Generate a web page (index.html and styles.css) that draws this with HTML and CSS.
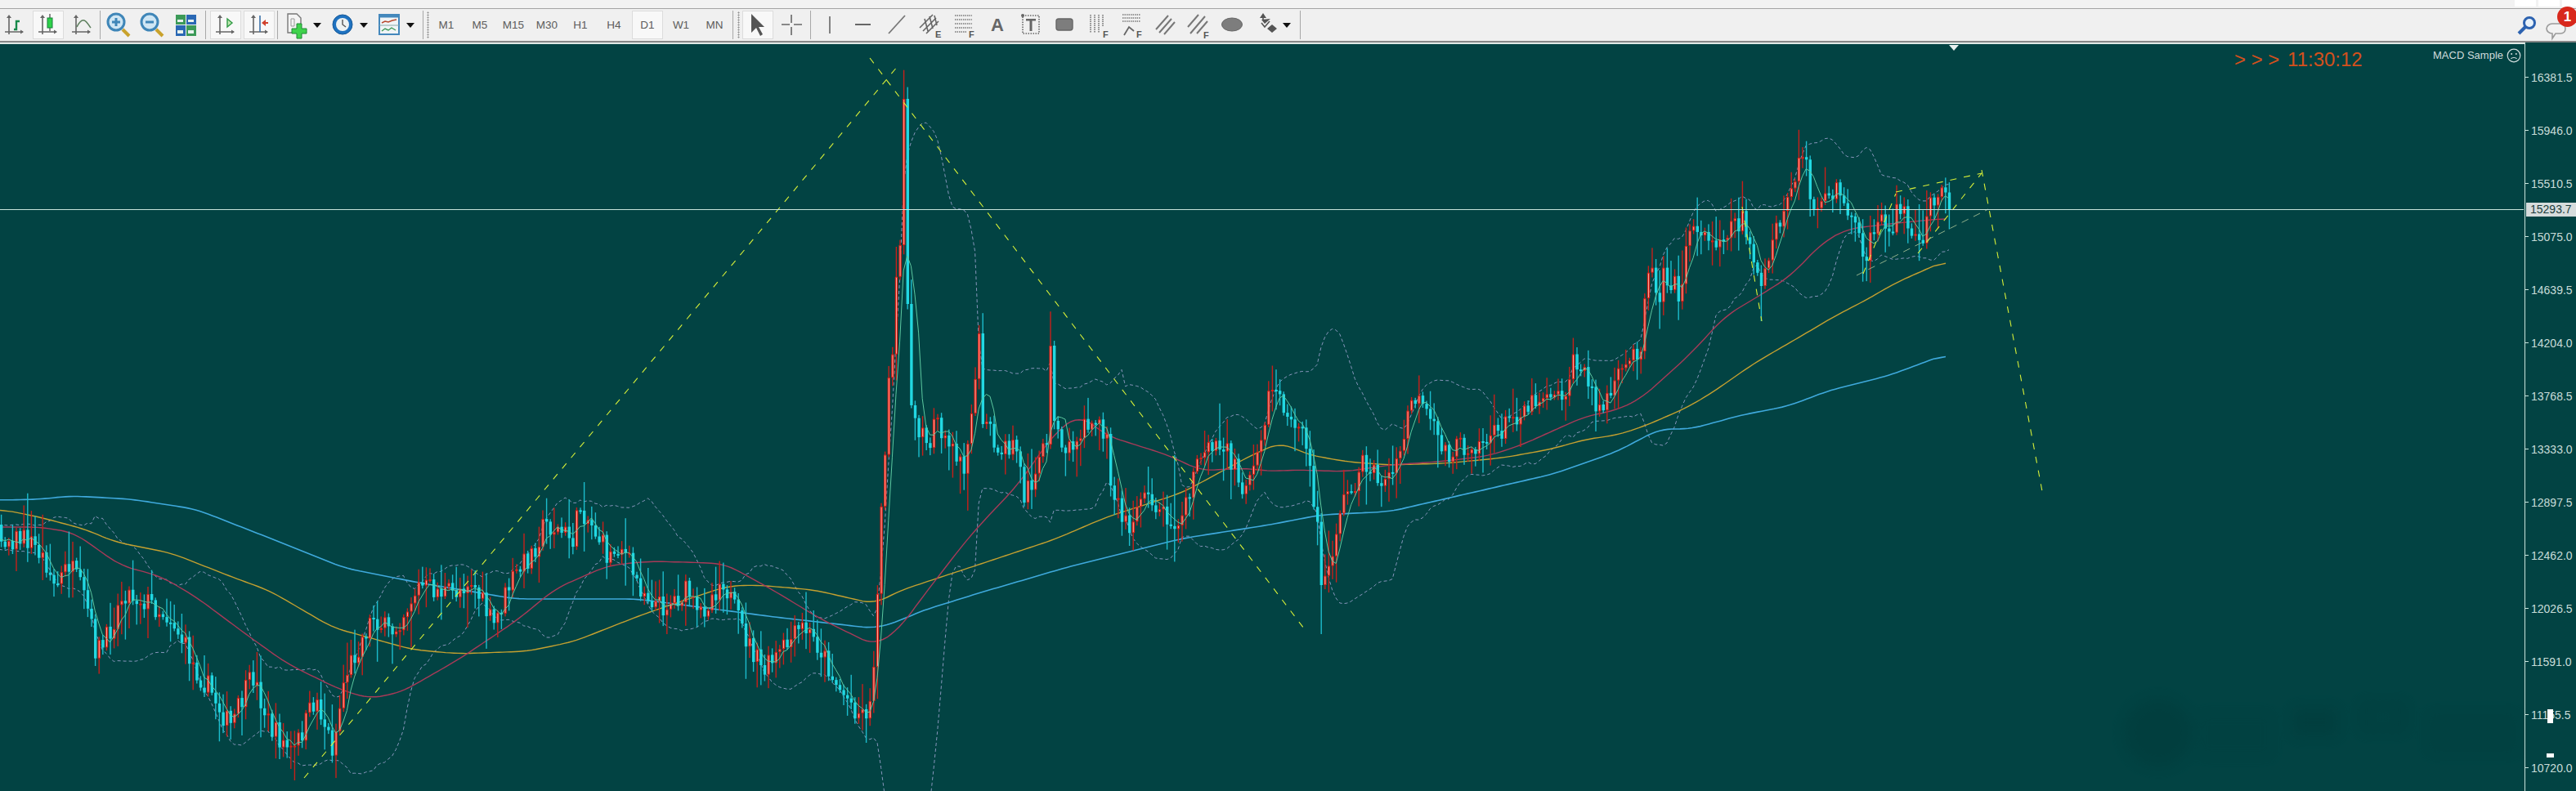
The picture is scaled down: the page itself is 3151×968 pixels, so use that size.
FILE: index.html
```html
<!DOCTYPE html>
<html lang="en">
<head>
<meta charset="UTF-8">
<title>MetaTrader chart</title>
<link rel="stylesheet" href="styles.css">
</head>
<body>

<svg class="defs" width="0" height="0">
  <!-- The two chart axes most of the first buttons share -->
  <symbol id="axes" viewBox="0 0 38 35">
    <path d="M12 8v21M7 26h22" fill="none" stroke="#666" stroke-width="1.6"/>
    <path d="M12 5l-3 4h6zM30 26l-4-2.5v5z" fill="#666"/>
  </symbol>
</svg>

<div class="titlebar">
  <span class="win-btn"></span>
  <span class="win-btn"></span>
  <span class="win-btn win-btn-small"></span>
</div>

<div class="toolbar">
  <div class="group first">
    <div class="btn"><svg viewBox="0 0 38 35"><use href="#axes"/><path d="M18 23h3v-10h4" fill="none" stroke="#17894a" stroke-width="2.4"/></svg></div>
    <div class="btn active"><svg viewBox="0 0 38 35"><use href="#axes"/><path d="M21 4v21" stroke="#444" stroke-width="1.2"/><rect x="18" y="9" width="6" height="12" fill="#2fd24a" stroke="#17803a"/></svg></div>
    <div class="btn"><svg viewBox="0 0 38 35"><use href="#axes"/><path d="M13 20c3-6 6-9 9-8s5 5 8 9" fill="none" stroke="#5d7f5d" stroke-width="1.6"/></svg></div>
  </div>
  <span class="sep sep-narrow"></span>
  <div class="group">
    <div class="btn"><svg viewBox="0 0 38 35"><path d="M24 23l8 8" stroke="#c9a22c" stroke-width="4"/><circle cx="16" cy="14" r="10" fill="#cfe6f4" stroke="#3f86b8" stroke-width="3"/><path d="M11 14h10M16 9v10" stroke="#3f86b8" stroke-width="3"/></svg></div>
    <div class="btn"><svg viewBox="0 0 38 35"><path d="M24 23l8 8" stroke="#c9a22c" stroke-width="4"/><circle cx="16" cy="14" r="10" fill="#cfe6f4" stroke="#3f86b8" stroke-width="3"/><path d="M11 14h10" stroke="#3f86b8" stroke-width="3"/></svg></div>
    <div class="btn"><svg viewBox="0 0 38 35">
      <rect x="7" y="5" width="12" height="12" fill="#3c9a58"/><rect x="20" y="5" width="12" height="12" fill="#2a68b4"/>
      <rect x="7" y="18" width="12" height="13" fill="#2a68b4"/><rect x="20" y="18" width="12" height="13" fill="#3c9a58"/>
      <path d="M9 11h7v3H9zM22 11h7v3h-7zM9 24h7v4H9zM22 24h7v4h-7z" fill="#e8f2ee"/>
    </svg></div>
  </div>
  <span class="sep sep-wide"></span>
  <div class="group">
    <div class="btn active"><svg viewBox="0 0 38 35"><use href="#axes"/><path d="M21 10l6 5-6 5z" fill="#bfe8b0" stroke="#2f9a45" stroke-width="1.4"/></svg></div>
    <div class="btn active"><svg viewBox="0 0 38 35"><use href="#axes"/><path d="M20 6v20" stroke="#3a70a8" stroke-width="1.6"/><path d="M22 15l5-4v3h3v2h-3v3z" fill="#d0402c"/></svg></div>
  </div>
  <span class="sep sep-narrow"></span>
  <div class="group tight">
    <div class="drop">
      <div class="btn"><svg viewBox="0 0 38 35"><path d="M9 4h11l5 5v18H9z" fill="#f4f4f4" stroke="#777" stroke-width="1.4"/><path d="M13 10h4v9h-4z" fill="none" stroke="#999"/><path d="M20 16h6v6h6v6h-6v6h-6v-6h-6v-6h6z" fill="#3fd24c" stroke="#1f8a35"/></svg></div>
      <span class="caret"></span>
    </div>
    <div class="drop">
      <div class="btn"><svg viewBox="0 0 38 35"><circle cx="19" cy="17" r="12" fill="#1f72c0" stroke="#185a98"/><circle cx="19" cy="17" r="8" fill="#eef2f2"/><path d="M19 11v6l4 3" fill="none" stroke="#555" stroke-width="1.4"/></svg></div>
      <span class="caret"></span>
    </div>
    <div class="drop">
      <div class="btn"><svg viewBox="0 0 38 35"><rect x="7" y="5" width="24" height="24" fill="#f0f4f6" stroke="#4488bc" stroke-width="2"/><path d="M7 7h24" stroke="#4488bc" stroke-width="3"/><path d="M10 15l4-2 4 1 5-2 5-1" fill="none" stroke="#b84a30" stroke-width="1.4"/><path d="M7 18h24" stroke="#8aa" stroke-width="1"/><path d="M10 25l4-3 4 2 4-3 5 3" fill="none" stroke="#3c9a58" stroke-width="1.4"/></svg></div>
      <span class="caret"></span>
    </div>
  </div>
  <span class="sep sep-narrow"></span>
  <span class="grip"></span>
  <div class="group">
    <div class="btn tf">M1</div>
    <div class="btn tf">M5</div>
    <div class="btn tf">M15</div>
    <div class="btn tf">M30</div>
    <div class="btn tf">H1</div>
    <div class="btn tf">H4</div>
    <div class="btn tf active">D1</div>
    <div class="btn tf">W1</div>
    <div class="btn tf">MN</div>
  </div>
  <span class="sep sep-narrow"></span>
  <span class="grip grip-tools"></span>
  <div class="group">
    <div class="btn active"><svg viewBox="0 0 38 35"><path d="M11 4v23l6-6 5 10 3-2-5-9h7z" fill="#555"/></svg></div>
    <div class="btn"><svg viewBox="0 0 38 35"><path d="M19 5v10M19 20v10M7 17h10M22 17h10" stroke="#666" stroke-width="1.6"/></svg></div>
  </div>
  <span class="sep sep-tools"></span>
  <div class="group">
    <div class="btn"><svg viewBox="0 0 38 35"><path d="M19 7v21" stroke="#666" stroke-width="1.6"/></svg></div>
    <div class="btn"><svg viewBox="0 0 38 35"><path d="M9 17h19" stroke="#666" stroke-width="2"/></svg></div>
    <div class="btn"><svg viewBox="0 0 38 35"><path d="M9 28L29 6" stroke="#777" stroke-width="1.8"/></svg></div>
    <div class="btn"><svg viewBox="0 0 38 35"><path d="M6 21L22 5M10 25L26 9M14 28L29 13M12 10l4 15M18 7l4 15M24 6l3 12" stroke="#666" stroke-width="1.6" fill="none"/><text x="25" y="33" class="mark">E</text></svg></div>
    <div class="btn"><svg viewBox="0 0 38 35"><path d="M8 6h21M8 11h21M8 16h21M8 21h21M8 26h14" stroke="#777" stroke-width="1.6" stroke-dasharray="1.5 1"/><text x="25" y="33" class="mark">F</text></svg></div>
    <div class="btn"><span class="letter">A</span></div>
    <div class="btn"><svg viewBox="0 0 38 35"><rect x="9" y="6" width="20" height="22" fill="none" stroke="#666" stroke-width="1.6" stroke-dasharray="1.5 1.5"/><circle cx="9" cy="6" r="2" fill="#666"/><path d="M13 10h12v2.500h-4.500V25h-3V12.500H13z" fill="#666"/></svg></div>
    <div class="btn"><svg viewBox="0 0 38 35"><rect x="9" y="10" width="20" height="14" rx="3" fill="#7d7d7d" stroke="#666" stroke-width="1.4"/></svg></div>
    <div class="btn"><svg viewBox="0 0 38 35"><path d="M10 5v22M15 5v22M20 5v22M25 5v14" stroke="#777" stroke-width="1.6" stroke-dasharray="1.5 1"/><text x="25" y="33" class="mark">F</text></svg></div>
    <div class="btn"><svg viewBox="0 0 38 35"><path d="M8 5h22M8 9h22M8 13h22" stroke="#777" stroke-width="1.6" stroke-dasharray="1.5 1"/><path d="M10 30l6-10 6 5" fill="none" stroke="#666" stroke-width="1.8"/><text x="25" y="33" class="mark">F</text></svg></div>
    <div class="btn"><svg viewBox="0 0 38 35"><path d="M8 23L23 6M12 27L27 10M18 29L31 14" stroke="#777" stroke-width="2"/></svg></div>
    <div class="btn"><svg viewBox="0 0 38 35"><path d="M6 20L19 5M9 28L27 7M17 28L30 13" stroke="#777" stroke-width="2"/><text x="25" y="34" class="mark">F</text></svg></div>
    <div class="btn"><svg viewBox="0 0 38 35"><ellipse cx="19" cy="17" rx="12.500" ry="8" fill="#7d7d7d" stroke="#666"/></svg></div>
    <div class="drop">
      <div class="btn"><svg viewBox="0 0 38 35"><path d="M16 3l4 6h-8zM14 11l4 5 7-6M27 27l-6-5 6-5 6 5z" fill="#555"/><path d="M16 9v3M14 15l4 5 6-7" fill="none" stroke="#555" stroke-width="1.6"/></svg></div>
      <span class="caret"></span>
    </div>
  </div>
  <span class="sep sep-end"></span>
  <div class="right-icons">
    <svg class="search" viewBox="0 0 24 24"><path d="M10 14l-8 8" stroke="#2c62b0" stroke-width="4"/><circle cx="15" cy="9" r="6.500" fill="#e8f2fa" stroke="#2c62b0" stroke-width="3"/></svg>
    <div class="chat">
      <svg viewBox="0 0 26 24"><path d="M9 3h10c4 0 6 3 6 6s-2 6-6 6h-6l-4 6v-6c-4 0-7-3-7-6s3-6 7-6z" fill="#f2f2f2" stroke="#9a9a9a" stroke-width="1.6"/></svg>
      <span class="badge">1</span>
    </div>
  </div>
</div>

<div class="workspace">
  <div class="chart" id="chart">
    <div class="clock"><span class="clock-arrows">&gt; &gt; &gt;</span> 11:30:12</div>
    <div class="ea-name">MACD Sample
      <svg viewBox="0 0 18 18"><circle cx="9" cy="9" r="7.800" fill="none" stroke="#d0dcdc" stroke-width="1.2"/><circle cx="6.200" cy="7" r="1" fill="#d0dcdc"/><circle cx="11.800" cy="7" r="1" fill="#d0dcdc"/><path d="M5.500 13c1-2 6-2 7 0" fill="none" stroke="#d0dcdc" stroke-width="1.2"/></svg>
    </div>
    <span class="shift-mark"></span>
  </div>
  <div class="axis" id="axis"></div>
  <div class="price-tag">15293.7</div>
  <span class="smudge smudge-a"></span>
  <span class="smudge smudge-b"></span>
  <svg class="watermark" viewBox="0 0 540 110">
    <ellipse cx="70" cy="55" rx="42" ry="42"/>
    <rect x="235" y="25" width="54" height="34"/>
    <rect x="322" y="22" width="46" height="27" fill="none" stroke="#013535" stroke-width="8"/>
    <rect x="400" y="30" width="110" height="50" opacity="0.45"/>
    <rect x="120" y="30" width="90" height="55" opacity="0.3"/>
  </svg>
</div>

<script src="chart.js"></script>
</body>
</html>
```

FILE: styles.css
```css
* {
  box-sizing: border-box;
}
html, body {
  margin: 0;
  padding: 0;
  width: 3151px;
  height: 968px;
  overflow: hidden;
  background-color: #024343;
  font-family: "Liberation Sans", Arial, sans-serif;
}
.defs {
  display: block;
  height: 0;
}
.titlebar {
  display: flex;
  justify-content: flex-end;
  gap: 3px;
  height: 11px;
  background-color: #f2f2f2;
  border-bottom: 1px solid #a4a4a4;
}
.win-btn {
  width: 26px;
  height: 8px;
  background-color: #fff;
}
.win-btn-small {
  width: 17px;
}
.toolbar {
  display: flex;
  align-items: center;
  height: 41px;
  background-color: #f0f0f0;
  border-bottom: 2px solid #888;
  position: relative;
}
.group {
  display: flex;
  gap: 3px;
  align-items: center;
}
.group.first {
  margin-left: -1px;
}
.group.tight {
  gap: 0;
}
.btn {
  width: 38px;
  height: 35px;
  flex: none;
  display: flex;
  align-items: center;
  justify-content: center;
  border: 1px solid transparent;
}
.btn svg {
  width: 38px;
  height: 35px;
  flex: none;
}
.btn.active {
  background-color: #f8f8f8;
  border-color: #dcdcdc;
}
.tf {
  font-size: 13.500px;
  color: #5c5c5c;
}
.letter {
  font-size: 22px;
  font-weight: bold;
  color: #666;
}
.mark {
  font-size: 11px;
  font-weight: bold;
  fill: #555;
}
.drop {
  display: flex;
  align-items: center;
  width: 57px;
}
.caret {
  width: 0;
  height: 0;
  border-left: 5px solid transparent;
  border-right: 5px solid transparent;
  border-top: 6px solid #111;
  margin-left: 2px;
}
.sep {
  width: 1px;
  height: 35px;
  background-color: #a8a8a8;
  flex: none;
}
.sep-narrow {
  margin: 0 3px;
}
.sep-wide {
  margin: 0 5px;
}
.sep-tools {
  margin: 0 4px;
}
.sep-end {
  margin-left: 4px;
}
.grip {
  width: 3px;
  height: 33px;
  margin: 0 2px 0 1px;
  flex: none;
  background-image: radial-gradient(#909090 45%, transparent 50%);
  background-size: 3px 3px;
}
.grip-tools {
  margin: 0 3px 0 2px;
}
.right-icons {
  margin-left: auto;
  display: flex;
  align-items: center;
}
.search {
  width: 24px;
  height: 24px;
  margin-right: 10px;
}
.chat {
  position: relative;
  width: 38px;
  height: 30px;
}
.chat svg {
  position: absolute;
  left: 0;
  top: 10px;
  width: 26px;
  height: 24px;
}
.badge {
  position: absolute;
  left: 15px;
  top: -8px;
  width: 25px;
  height: 25px;
  border-radius: 50%;
  background-color: #d8281c;
  color: #fff;
  font-size: 17px;
  font-weight: bold;
  line-height: 25px;
  text-align: center;
}
.workspace {
  display: flex;
  height: 916px;
  position: relative;
}
.chart {
  flex: 1;
  position: relative;
  background-color: #024343;
  border-top: 2px solid #dfe9e6;
  overflow: hidden;
}
.chart > svg.plot {
  display: block;
}
.clock {
  position: absolute;
  left: 2733px;
  top: 5px;
  color: #d4501c;
  font-size: 24px;
  white-space: nowrap;
}
.clock-arrows {
  margin-right: 3px;
}
.ea-name {
  position: absolute;
  right: 4px;
  top: 5px;
  display: flex;
  align-items: center;
  gap: 4px;
  color: #d0dcdc;
  font-size: 13px;
  line-height: 18px;
}
.ea-name svg {
  width: 18px;
  height: 18px;
}
.shift-mark {
  position: absolute;
  left: 2384px;
  top: 1px;
  width: 0;
  height: 0;
  border-left: 6px solid transparent;
  border-right: 6px solid transparent;
  border-top: 7px solid #e8f0f0;
}
.axis {
  width: 63px;
  flex: none;
  padding-top: 10px;
  border-left: 1px solid #c8e4dc;
  background-color: #024343;
}
.axis-label {
  display: flex;
  align-items: center;
  height: 65px;
  color: #c8dcd8;
  font-size: 14px;
}
.axis-label::before {
  content: "";
  width: 4px;
  height: 1px;
  margin-right: 3px;
  background-color: #c8e4dc;
}
.price-tag {
  position: absolute;
  left: 3090px;
  top: 196px;
  width: 61px;
  height: 17px;
  padding-left: 5px;
  background-color: #d6dcdc;
  color: #1c3c3c;
  font-size: 14px;
  line-height: 17px;
}
.smudge {
  position: absolute;
  background-color: #fff;
}
.smudge-a {
  left: 3116px;
  top: 816px;
  width: 7px;
  height: 17px;
}
.smudge-b {
  left: 3115px;
  top: 870px;
  width: 9px;
  height: 5px;
}
.watermark {
  position: absolute;
  left: 2570px;
  top: 790px;
  width: 540px;
  height: 110px;
  fill: #013535;
  opacity: 0.3;
  filter: blur(8px);
}
```

FILE: chart.js
```js
// Close prices as screen points (page x, page y), read off the picture
var closes = [
  [0,657],[35,660],[56,687],[67,720],[84,690],[105,737],[116,793],[126,793],[151,723],[182,737],
  [210,757],[239,820],[256,843],[281,890],[309,827],[330,890],[358,923],[386,853],[407,917],[421,827],
  [456,753],[477,777],[512,717],[554,727],[575,707],[603,767],[624,713],[652,673],[666,640],[702,660],
  [708,617],[730,653],[744,683],[758,663],[779,713],[807,743],[842,723],[852,757],[884,707],[905,767],
  [933,823],[947,807],[982,767],[1003,793],[1024,840],[1052,873],[1066,863],[1073,713],[1080,586],[1085,490],
  [1091,443],[1099,300],[1103,217],[1107,121],[1111,372],[1115,496],[1134,557],[1143,508],[1179,569],[1199,408],
  [1203,519],[1223,554],[1243,545],[1252,607],[1283,538],[1286,423],[1290,515],[1304,554],[1335,504],[1353,534],
  [1357,596],[1379,645],[1402,588],[1415,626],[1440,634],[1464,573],[1478,534],[1495,546],[1522,596],[1556,477],
  [1576,519],[1594,527],[1612,640],[1618,716],[1625,700],[1638,623],[1670,565],[1692,592],[1708,573],[1728,482],
  [1769,553],[1829,533],[1860,500],[1900,473],[1908,490],[1927,440],[1952,490],[1957,503],[1982,460],[2007,417],
  [2015,320],[2030,363],[2034,327],[2053,357],[2072,267],[2091,300],[2118,273],[2133,270],[2155,350],[2168,293],
  [2195,223],[2200,193],[2210,200],[2218,263],[2237,237],[2256,237],[2267,277],[2279,313],[2302,270],[2311,290],
  [2321,247],[2340,280],[2348,300],[2363,237],[2375,243],[2384,257]
];

// Closes the bars have to hit exactly, the sharp turns of the price
var fixedCloses = [
  [1099,300],[1103,217],[1107,121],[1111,372],[1115,496],[1199,408],[1203,519],[1286,423],[1290,515],
  [1556,477],[1618,716],[2155,350],[2200,193],[2384,257]
];

// Long wicks that the random ones would not reach
var wicks = [
  [1107,98],[1199,398],[1286,393],[1124,556],[1618,776],[2155,393],[1435,557],
  [116,815],[281,905],[358,955],[1179,598],[1252,620],[1379,668],[2279,330],[2207,185]
];

var maBlue = [
  [0,612],[49,611],[84,607],[109,608],[161,611],[239,623],[316,653],[421,695],[512,713],[631,733],[779,733],
  [856,743],[947,755],[1070,769],[1100,760],[1126,748],[1200,725],[1306,694],[1446,659],[1554,642],[1616,630],
  [1700,626],[1900,580],[1977,553],[2030,525],[2068,525],[2130,508],[2187,497],[2237,478],[2309,460],[2382,433]
];
var maOrange = [
  [0,623],[49,633],[105,648],[140,663],[210,677],[281,705],[330,723],[407,768],[505,795],[561,800],[645,797],
  [702,785],[786,752],[842,733],[891,717],[926,716],[996,722],[1070,739],[1100,723],[1200,690],[1290,660],
  [1353,633],[1446,603],[1531,557],[1567,541],[1598,556],[1647,565],[1700,569],[1769,567],[1840,560],[1900,549],
  [1938,538],[1980,532],[2015,520],[2065,498],[2095,480],[2145,445],[2202,412],[2244,387],[2283,367],[2317,347],[2382,318]
];
var maRed = [
  [0,645],[49,645],[91,652],[147,692],[196,705],[239,730],[302,777],[351,812],[414,843],[452,855],[491,847],
  [561,807],[631,760],[680,720],[744,692],[793,687],[842,688],[887,690],[947,723],[1003,757],[1070,790],[1100,770],
  [1125,735],[1183,660],[1210,630],[1243,596],[1290,530],[1321,507],[1353,533],[1429,557],[1469,576],[1522,573],
  [1558,577],[1580,575],[1647,577],[1700,569],[1760,565],[1820,558],[1860,545],[1900,527],[1938,510],[1977,502],
  [2007,488],[2068,433],[2110,387],[2160,357],[2191,337],[2229,297],[2260,280],[2321,273],[2382,267]
];

// Drawn trend lines
var trendLines = [
  [372,952,1098,81],
  [1064,71,1598,773],
  [2424,208,2498,601],
  [2131,253,2155,393],
  [2279,335,2319,237],
  [2319,235,2424,212],
  [2346,310,2424,212]
];

var seed = 7;
function rand() {
  seed = (seed * 16807) % 2147483647;
  return seed / 2147483647;
}

function interp(points, x) {
  if (x <= points[0][0]) return points[0][1];
  for (var i = 1; i < points.length; i++) {
    if (x <= points[i][0]) {
      var a = points[i - 1], b = points[i];
      return a[1] + (b[1] - a[1]) * (x - a[0]) / (b[0] - a[0]);
    }
  }
  return points[points.length - 1][1];
}

// Resample a hand-read line and average it so it has no corners
function smooth(points) {
  var last = points[points.length - 1][0];
  var out = [];
  for (var x = 0; x <= last; x += 5) {
    var sum = 0, count = 0;
    for (var d = -15; d <= 15; d += 5) {
      if (x + d >= 0 && x + d <= last) {
        sum += interp(points, x + d);
        count++;
      }
    }
    out.push([x, sum / count]);
  }
  return out;
}

function polyline(points, color, width, dash) {
  var s = "<polyline fill='none' stroke='" + color + "' stroke-width='" + width + "'";
  if (dash) s += " stroke-dasharray='" + dash + "'";
  s += " points='" + points.map(function(p) { return p[0].toFixed(1) + "," + p[1].toFixed(1); }).join(" ") + "'/>";
  return s;
}

// Build the bars, newest one is at x = 2384
var step = 4.6;
var forced = {};
fixedCloses.forEach(function(f) {
  forced[Math.round((2384 - f[0]) / step)] = f[1];
});

var bars = [];
var prevClose = 657;
for (var i = 540; i >= 0; i--) {
  var barX = 2384 - i * step;
  var barClose = forced[i] !== undefined ? forced[i] : interp(closes, barX) + (rand() - 0.5) * 30;
  var bodyTop = Math.min(prevClose, barClose), bodyBottom = Math.max(prevClose, barClose);
  bars.push({
    x: barX,
    open: prevClose,
    close: barClose,
    high: bodyTop - rand() * rand() * 44 - 3,
    low: bodyBottom + rand() * rand() * 44 + 3
  });
  prevClose = barClose;
}

wicks.forEach(function(w) {
  var bar = bars.reduce(function(best, b) {
    return Math.abs(b.x - w[0]) < Math.abs(best.x - w[0]) ? b : best;
  });
  if (w[1] < bar.close) bar.high = Math.min(bar.high, w[1]);
  else bar.low = Math.max(bar.low, w[1]);
});

// Fast average and Bollinger bands from the closes
var fast = [], upper = [], lower = [];
bars.forEach(function(bar, n) {
  if (n < 20) return;
  var sum = 0, k;
  for (k = 0; k < 5; k++) sum += bars[n - k].close;
  fast.push([bar.x, sum / 5]);
  var total = 0, sq = 0;
  for (k = 0; k < 20; k++) total += bars[n - k].close;
  var mean = total / 20;
  for (k = 0; k < 20; k++) sq += Math.pow(bars[n - k].close - mean, 2);
  var dev = Math.sqrt(sq / 20);
  upper.push([bar.x, mean - 2 * dev]);
  lower.push([bar.x, mean + 2 * dev]);
});

var bands = polyline(upper, "#8796bc", 1, "4 3") + polyline(lower, "#8796bc", 1, "4 3");
var averages = polyline(smooth(maBlue), "#3fa9dc", 1.6) + polyline(smooth(maOrange), "#c4a030", 1.4) + polyline(smooth(maRed), "#a83a58", 1.4);

var candles = "";
bars.forEach(function(bar) {
  var up = bar.close < bar.open;
  var yTop = Math.min(bar.open, bar.close);
  var height = Math.max(Math.abs(bar.open - bar.close), 2);
  candles += "<rect x='" + (bar.x - 0.3).toFixed(1) + "' y='" + bar.high.toFixed(1) + "' width='1.4' height='" + (bar.low - bar.high).toFixed(1) + "' fill='" + (up ? "#c8201a" : "#1cbccc") + "'/>";
  if (up) {
    candles += "<rect x='" + (bar.x - 1.2).toFixed(1) + "' y='" + yTop.toFixed(1) + "' width='3.4' height='" + height.toFixed(1) + "' fill='#dc2018'/>";
    candles += "<rect x='" + bar.x.toFixed(1) + "' y='" + (yTop + 1).toFixed(1) + "' width='1' height='" + Math.max(height - 2, 0).toFixed(1) + "' fill='#ffa898'/>";
  } else {
    candles += "<rect x='" + (bar.x - 1.2).toFixed(1) + "' y='" + yTop.toFixed(1) + "' width='3.4' height='" + height.toFixed(1) + "' fill='#22d8e2'/>";
  }
});

var lines = "";
trendLines.forEach(function(t) {
  lines += "<line x1='" + t[0] + "' y1='" + t[1] + "' x2='" + t[2] + "' y2='" + t[3] + "' stroke='#d8f038' stroke-width='1.1' stroke-dasharray='8 9'/>";
});
lines += "<line x1='2271' y1='337' x2='2432' y2='256' stroke='#8fb08a' stroke-width='1' stroke-dasharray='9 7'/>";

var hline = "<line x1='0' y1='256.5' x2='3088' y2='256.5' stroke='#c8e4dc' stroke-width='1'/>";

// viewBox starts at y 54 so all the numbers above stay in page coordinates
var plot = "<svg class='plot' width='3087' height='914' viewBox='0 54 3087 914'>" +
  bands + averages + candles + polyline(fast, "#5cc8a0", 1) + lines + hline + "</svg>";
document.getElementById("chart").insertAdjacentHTML("afterbegin", plot);

// Price axis
var labels = ["16381.5","15946.0","15510.5","15075.0","14639.5","14204.0","13768.5","13333.0","12897.5","12462.0","12026.5","11591.0","11155.5","10720.0"];
var axis = document.getElementById("axis");
labels.forEach(function(text) {
  axis.innerHTML += "<div class='axis-label'>" + text + "</div>";
});
```
